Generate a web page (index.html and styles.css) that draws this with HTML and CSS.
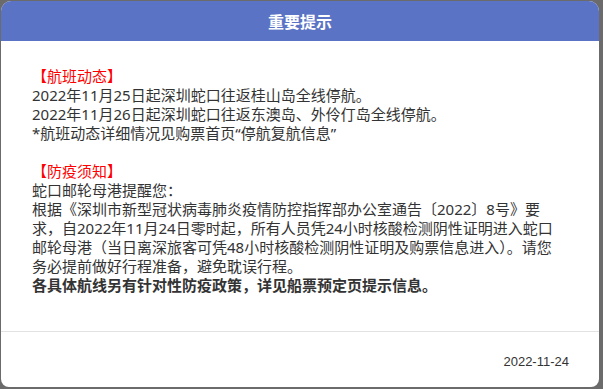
FILE: index.html
```html
<!DOCTYPE html>
<html lang="zh-CN">
<head>
  <meta charset="UTF-8">
  <title>重要提示</title>
  <link rel="stylesheet" href="styles.css">
</head>
<body>
  <div class="modal">

    <!-- Header -->
    <div class="modal-head">重要提示</div>

    <!-- Notice body -->
    <div class="modal-body">
      <p class="tag">【航班动态】</p>
      <p>2022年11月25日起深圳蛇口往返桂山岛全线停航。</p>
      <p>2022年11月26日起深圳蛇口往返东澳岛、外伶仃岛全线停航。</p>
      <p>*航班动态详细情况见购票首页“停航复航信息”</p>
      <p class="gap"></p>
      <p class="tag">【防疫须知】</p>
      <p>蛇口邮轮母港提醒您：</p>
      <p>根据《深圳市新型冠状病毒肺炎疫情防控指挥部办公室通告〔2022〕8号》要<br>求，自2022年11月24日零时起，所有人员凭24小时核酸检测阴性证明进入蛇口<br>邮轮母港（当日离深旅客可凭48小时核酸检测阴性证明及购票信息进入）。请您<br>务必提前做好行程准备，避免耽误行程。</p>
      <p class="strong">各具体航线另有针对性防疫政策，详见船票预定页提示信息。</p>
    </div>

    <!-- Footer -->
    <div class="modal-foot">2022-11-24</div>

  </div>
</body>
</html>
```

FILE: styles.css
```css
/* Reset + base */
* { margin:0; padding:0; box-sizing:border-box; }
body {
  background:#6b6b6b;
  font-family:"Noto Sans", "Noto Sans CJK SC", sans-serif;
  color:#333;
  padding:1px 4px 2px 1px;
}

/* Dialog box */
.modal {
  width:598px;
  height:386px;
  background:#fff;
  border-radius:10px 10px 8px 8px;
  overflow:hidden;
  display:flex;
  flex-direction:column;
}

.modal-head {
  height:40px;
  background:#5b73c4;
  color:#fff;
  font-size:16px;
  font-weight:bold;
  display:flex;
  align-items:center;
  justify-content:center;
}

/* Notice text */
.modal-body {
  flex:1;
  padding:26px 20px 0 31px;
  font-size:15px;
  line-height:19px;
  border-bottom:1px solid #e2e2e2;
}
.modal-body p { white-space:nowrap; }
.modal-body .gap { height:19px; }
.modal-body .tag { color:#f00; }
.modal-body .strong { font-weight:bold; }

.modal-foot {
  height:55px;
  padding:4px 30px 0 0;
  display:flex;
  align-items:center;
  justify-content:flex-end;
  font-family:"Liberation Sans", sans-serif;
  font-size:13px;
  color:#333;
}
```
